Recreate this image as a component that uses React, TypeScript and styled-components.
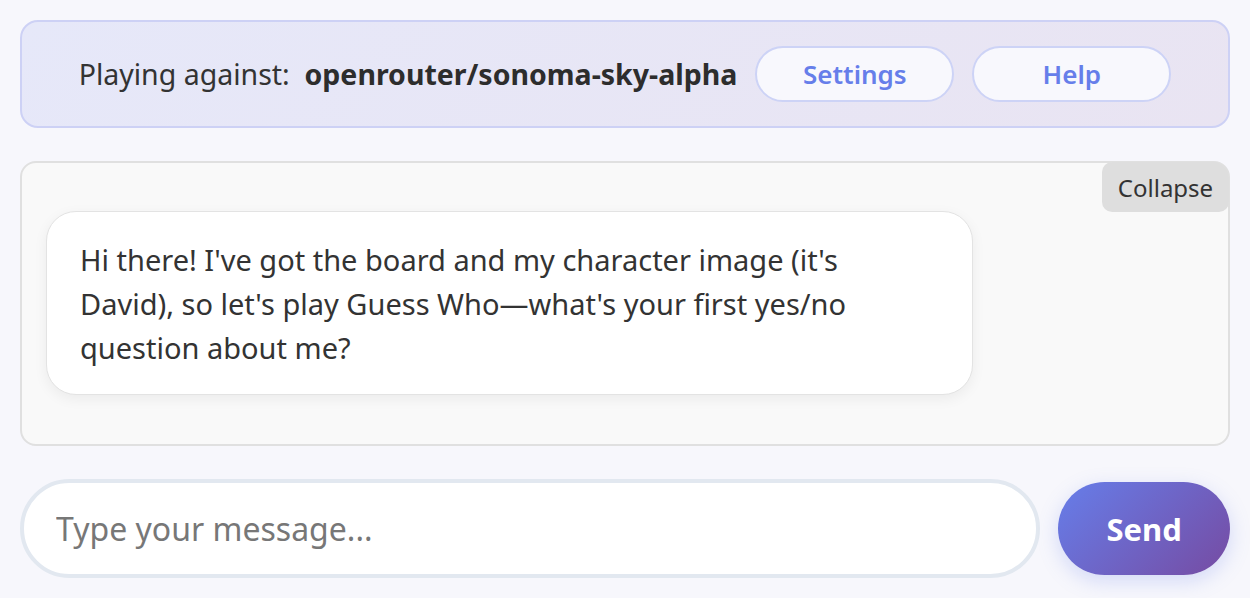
import React from "react";
import styled, { createGlobalStyle } from "styled-components";

const Global = createGlobalStyle`
  html, body { margin: 0; padding: 0; background: #f7f7fc; }
  body { font-family: "Noto Sans", "Open Sans", sans-serif; color: #333; }
  * { box-sizing: border-box; }
`;

const Page = styled.div`
  width: 1250px;
  height: 598px;
  padding: 20px 20px 0 20px;
  display: flex;
  flex-direction: column;
  gap: 33px;
`;

const Header = styled.header`
  height: 108px;
  flex-shrink: 0;
  border: 2px solid #cdd1f5;
  border-radius: 18px;
  background: linear-gradient(135deg, #e6e8f9 0%, #e9e4f2 100%);
  display: flex;
  align-items: center;
  justify-content: center;
  gap: 18px;
`;

const Label = styled.span`
  font-size: 28.5px;
  color: #333;
  font-weight: 400;
  white-space: pre;
`;

const Model = styled.b`
  font-weight: 700;
  color: #2d2d2d;
`;

const PillButton = styled.button`
  width: 199px;
  height: 56px;
  border-radius: 28px;
  border: 2px solid #cdd3f6;
  background: #f8f8fd;
  color: #667eea;
  font-family: "Noto Sans", sans-serif;
  font-size: 26px;
  font-weight: 600;
  cursor: pointer;
`;

const Panel = styled.section`
  position: relative;
  height: 285px;
  flex-shrink: 0;
  border: 2px solid #e0e0e0;
  border-radius: 16px;
  background: #f9f9f9;
  padding: 48px 24px;
`;

const Collapse = styled.button`
  position: absolute;
  top: -1px;
  right: -1px;
  width: 127px;
  height: 50px;
  border: none;
  border-radius: 10px 16px 10px 10px;
  background: #dedede;
  color: #333;
  font-family: "Noto Sans", sans-serif;
  font-size: 24px;
  cursor: pointer;
`;

const Bubble = styled.div`
  width: 927px;
  background: #fff;
  border: 1.5px solid #e3e3e3;
  border-radius: 30px;
  box-shadow: 0 4px 14px rgba(0, 0, 0, 0.06);
  padding: 26px 50px 24px 33px;
  font-size: 29px;
  line-height: 44px;
  color: #333;
`;

const InputRow = styled.div`
  display: flex;
  align-items: center;
  gap: 18px;
`;

const Input = styled.input`
  width: 1021px;
  height: 99px;
  border: 4px solid #e2e8f0;
  border-radius: 50px;
  background: #fff;
  padding: 0 32px;
  font-family: "Noto Sans", sans-serif;
  font-size: 32px;
  color: #333;
  outline: none;
  &::placeholder { color: #777; }
`;

const Send = styled.button`
  width: 172px;
  height: 93px;
  border: none;
  border-radius: 47px;
  background: linear-gradient(135deg, #667eea 0%, #764ba2 100%);
  color: #fff;
  font-family: "Noto Sans", sans-serif;
  font-size: 31px;
  font-weight: 700;
  box-shadow: 0 6px 20px rgba(102, 126, 234, 0.25);
  cursor: pointer;
`;

export default function App() {
  return (
    <>
      <Global />
      <Page>
        <Header>
          <Label>
            Playing against:  <Model>openrouter/sonoma-sky-alpha</Model>
          </Label>
          <PillButton>Settings</PillButton>
          <PillButton>Help</PillButton>
        </Header>
        <Panel>
          <Collapse>Collapse</Collapse>
          <Bubble>
            Hi there! I've got the board and my character image (it's David), so let's play Guess Who—what's your first yes/no question about me?
          </Bubble>
        </Panel>
        <InputRow>
          <Input placeholder="Type your message..." />
          <Send>Send</Send>
        </InputRow>
      </Page>
    </>
  );
}
